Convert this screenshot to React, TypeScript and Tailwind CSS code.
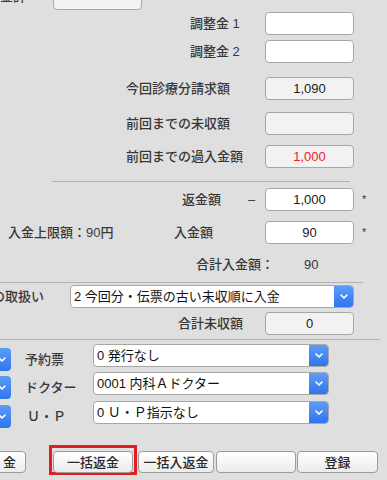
import React from "react";

const Chevron: React.FC = () => (
  <svg width="8" height="5" viewBox="0 0 8 5" fill="none">
    <path d="M1 1l3 3 3-3" stroke="white" strokeWidth="1.6" strokeLinecap="round" strokeLinejoin="round" />
  </svg>
);

const Field: React.FC<{ value?: string; readOnly?: boolean; red?: boolean }> = ({ value, readOnly, red }) => (
  <div
    className={`w-[89px] h-[23px] rounded-[4px] border border-[#a7a7a7] flex items-center justify-center text-[13px] font-normal ${
      readOnly ? "bg-[#f2f2f2]" : "bg-white"
    } ${red ? "text-[#f2201f]" : "text-[#1a1a1a]"}`}
  >
    {value}
  </div>
);

const Select: React.FC<{ text: string; width: string }> = ({ text, width }) => (
  <div className={`${width} h-[23px] flex rounded-[4px] border border-[#a7a7a7] bg-white overflow-hidden`}>
    <div className="flex-1 flex items-center pl-[3px] text-[13px] font-normal text-[#111] whitespace-nowrap">{text}</div>
    <div className="w-[19px] flex items-center justify-center bg-linear-to-b from-[#5c9cf7] to-[#2f75ee]">
      <Chevron />
    </div>
  </div>
);

const Btn: React.FC<{ label?: string; className?: string }> = ({ label, className }) => (
  <div
    className={`h-[22px] flex items-center rounded-[4px] border border-[#9c9c9c] bg-linear-to-b from-white to-[#ebebeb] text-[13px] text-[#2a2a2a] whitespace-nowrap ${className ?? ""}`}
  >
    {label}
  </div>
);

const Row: React.FC<{ label: string; pl: string; children: React.ReactNode; className?: string }> = ({
  label,
  pl,
  children,
  className,
}) => (
  <div className={`flex items-center h-[23px] ${className ?? ""}`}>
    <div className={`w-[265px] ${pl} whitespace-nowrap`}>{label}</div>
    {children}
  </div>
);

const SubRow: React.FC<{ label: string; labelPl?: string; text: string; className?: string }> = ({
  label,
  labelPl,
  text,
  className,
}) => (
  <div className={`flex items-start ${className ?? ""}`}>
    <div className="ml-[-8px] w-[19px] h-[23px] mt-[4px] rounded-[4px] flex items-center justify-center bg-linear-to-b from-[#5c9cf7] to-[#2f75ee]">
      <Chevron />
    </div>
    <div className={`ml-[14px] w-[68px] h-[23px] mt-[4px] flex items-center whitespace-nowrap ${labelPl ?? ""}`}>
      {label}
    </div>
    <Select text={text} width="w-[236px]" />
  </div>
);

export default function App() {
  return (
    <div className="w-[387px] h-[480px] overflow-hidden bg-[#dfdfdf] text-[13px] leading-none font-medium text-[#383838] font-['Liberation_Sans','Noto_Sans_CJK_JP',sans-serif]">
      {/* partial top row */}
      <div className="flex items-center h-[23px] mt-[-13px]">
        <div className="w-[26px] overflow-hidden flex justify-end whitespace-nowrap mt-[-5px]">請求金計</div>
        <div className="ml-[27px]">
          <Field readOnly />
        </div>
      </div>

      <Row label="調整金 1" pl="pl-[190px]" className="mt-[2px]">
        <Field />
      </Row>
      <Row label="調整金 2" pl="pl-[190px]" className="mt-[5px]">
        <Field />
      </Row>
      <Row label="今回診療分請求額" pl="pl-[126px]" className="mt-[14px]">
        <Field value="1,090" readOnly />
      </Row>
      <Row label="前回までの未収額" pl="pl-[126px]" className="mt-[12px]">
        <Field readOnly />
      </Row>
      <Row label="前回までの過入金額" pl="pl-[126px]" className="mt-[10px]">
        <Field value="1,000" readOnly red />
      </Row>

      <div className="ml-[52px] w-[298px] border-t border-[#b3b3b3] mt-[13px]" />

      <div className="flex items-center h-[23px] mt-[6px]">
        <div className="w-[265px] flex">
          <span className="ml-[182px]">返金額</span>
          <span className="ml-[27px]">–</span>
        </div>
        <Field value="1,000" />
        <span className="ml-[8px] text-[11px]">*</span>
      </div>

      <div className="flex items-center h-[23px] mt-[10px]">
        <div className="w-[265px] flex whitespace-nowrap">
          <span className="w-[174px] pl-[8px]">入金上限額：90円</span>
          <span>入金額</span>
        </div>
        <Field value="90" />
        <span className="ml-[8px] text-[11px]">*</span>
      </div>

      <div className="flex items-center h-[23px] mt-[9px] whitespace-nowrap">
        <span className="w-[304px] pl-[196px]">合計入金額：</span>
        <span>90</span>
      </div>

      <div className="w-[363px] border-t border-[#b3b3b3] mt-[6px]" />

      <div className="flex items-center mt-[2px]">
        <div className="w-[44px] overflow-hidden flex justify-end whitespace-nowrap">入金の取扱い</div>
        <div className="ml-[26px]">
          <Select text="2 今回分・伝票の古い未収順に入金" width="w-[284px]" />
        </div>
      </div>

      <Row label="合計未収額" pl="pl-[178px]" className="mt-[4px]">
        <Field value="0" readOnly />
      </Row>

      <div className="w-[380px] border-t border-[#b3b3b3] mt-[4px]" />

      <SubRow label="予約票" text="0 発行なし" className="mt-[4px]" />
      <SubRow label="ドクター" text="0001 内科Ａドクター" className="mt-[1px]" />
      <SubRow label="Ｕ・Ｐ" labelPl="pl-[2px]" text="0 Ｕ・Ｐ指示なし" className="mt-[2px]" />

      <div className="flex items-start mt-[17px]">
        <Btn label="金" className="ml-[-54px] w-[80px] justify-end pr-[9px] mt-[6px]" />
        <div className="ml-[23px] w-[88px] h-[30px] border-[3px] border-[#e41d23] pl-[1px] pt-[3px]">
          <Btn label="一括返金" className="w-[80px] h-[21px] justify-center" />
        </div>
        <Btn label="一括入返金" className="ml-[1px] w-[76px] justify-center mt-[6px]" />
        <Btn className="ml-[2px] w-[80px] mt-[6px]" />
        <Btn label="登録" className="ml-[1px] w-[81px] justify-center mt-[6px]" />
      </div>
    </div>
  );
}
